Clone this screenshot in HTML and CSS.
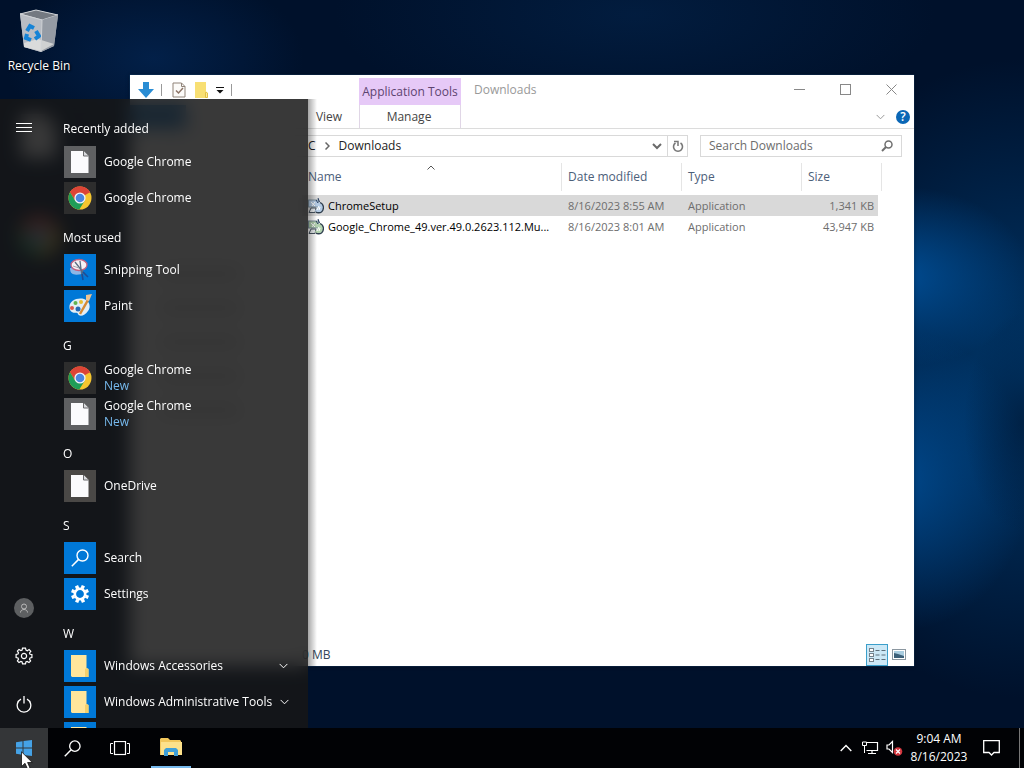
FILE: index.html
```html
<!DOCTYPE html>
<html lang="en">
<head>
<meta charset="utf-8">
<title>Desktop</title>
<link rel="stylesheet" href="styles.css">
</head>
<body>
<svg class="defs" width="0" height="0" aria-hidden="true">
  <defs>
    <symbol id="chrome" viewBox="0 0 24 24">
      <circle cx="12" cy="12" r="11.5" fill="#f6c62f"/>
      <path d="M12 12 L2.04 6.25 A11.5 11.5 0 0 1 21.96 6.25 Z" fill="#dc4537"/>
      <path d="M12 6.5 H22.2 A11.5 11.5 0 0 0 2.04 6.25 L7.2 14.7 Z" fill="#dc4537"/>
      <path d="M2.04 6.25 A11.5 11.5 0 0 0 11.3 23.5 L16.7 14.8 L12 12 L7.2 14.7 Z" fill="#1f9d58"/>
      <circle cx="12" cy="12" r="5.6" fill="#f3f5f8"/>
      <circle cx="12" cy="12" r="4.3" fill="#4a86e0"/>
    </symbol>
    <symbol id="page" viewBox="0 0 18 22">
      <path d="M0 0 H12.500 L17.500 5 V22 H0 Z" fill="#fbfbfd"/>
      <path d="M12.500 0 V5 H17.500" fill="#d9dadd" stroke="#6a6a6c" stroke-width="1"/>
    </symbol>
    <symbol id="folder" viewBox="0 0 18 22">
      <path d="M0 0 H15.500 V13 L17.500 14 V22 H1 L0 21 Z" fill="#ffe59b"/>
      <path d="M15.500 13 L17.500 14 V22 H14 V14 Z" fill="#f4cf6c"/>
    </symbol>
    <symbol id="lens" viewBox="0 0 18 18">
      <circle cx="11.500" cy="6.500" r="5.500" fill="none" stroke="currentColor" stroke-width="1.400"/>
      <path d="M7.600 10.400 L.8 17.200" stroke="currentColor" stroke-width="1.500"/>
    </symbol>
    <symbol id="chev" viewBox="0 0 10 6">
      <path d="M.7 .7 L5 5 L9.300 .7" fill="none" stroke="currentColor" stroke-width="1.100"/>
    </symbol>
    <symbol id="setup" viewBox="0 0 16 16">
      <rect x=".5" y="2" width="10" height="7" fill="currentColor" stroke="#7f909c"/>
      <path d="M1 14.500 L3 10 H8 L7 14.500 Z" fill="#eef2f5" stroke="#4a5662"/>
      <path d="M3 4 L7 8 M7 4 L4 8" stroke="#fff"/>
      <path d="M10 4.500 C16 4 17 11 13.500 14 C11 15.500 7.500 15 7 12.500 C9 11 10.500 9 10 4.500 Z" fill="currentColor"/>
      <path d="M12 4.500 C16 6 16.500 11 13.500 14 C12 15 9 15 8 14" fill="none" stroke="#2f3e4e" stroke-width="1.300"/>
      <path d="M11 8 L9 12 M12 9 L11 12" stroke="#fff"/>
      <path d="M10 0 L11.500 4 M8 2 L10 5" stroke="#243a5c"/>
    </symbol>
  </defs>
</svg>

<main class="desktop">
  <div class="shortcuts">
    <a class="shortcut" href="#bin">
      <svg width="40" height="44" viewBox="0 0 40 44" aria-hidden="true">
        <path d="M1 5 L17 1 L39 6 L35 37 L22 43 L5 38 Z" fill="#b5b9bf"/>
        <path d="M1 5 L17 1 L39 6 L23 11 Z" fill="#747981" stroke="#d0d3d7"/>
        <path d="M1 5 L23 11 L22 43 L5 38 Z" fill="#b9bdc4"/>
        <path d="M23 11 L39 6 L35 37 L22 43 Z" fill="#959ba4"/>
        <path d="M5 34 L19 30 L35 35 L22 42 L5 38 Z" fill="#e8e8e5" opacity=".7"/>
        <g fill="none" stroke="#1683d6" stroke-width="4">
          <path d="M8 22 L11 17 L15 19"/><path d="M17 22 L20 27 L16 30"/><path d="M12 31 L7 29 L8 25"/>
        </g>
        <path d="M1 5 L23 11 L22 43" fill="none" stroke="#cfd2d6"/>
      </svg>
      <span>Recycle Bin</span>
    </a>
    <svg class="covered" width="36" height="44" viewBox="0 0 18 22" aria-hidden="true"><use href="#page"/></svg>
    <svg class="covered" width="44" height="44" aria-hidden="true"><use href="#chrome"/></svg>
  </div>

  <section class="window" aria-label="Downloads">
    <header class="titlebar">
      <div class="quick">
        <svg width="16" height="16" viewBox="0 0 16 16" aria-hidden="true"><path d="M5 0 H11 V7 H16 L8 16 L0 7 H5 Z" fill="#2a8dd4"/></svg>
        <i class="sep"></i>
        <button class="plain" aria-label="Properties"><svg width="14" height="16" viewBox="0 0 14 16"><path d="M1 1 H9.500 L13 4.500 V15 H1 Z M9.500 1 V4.500 H13" fill="#fcfbf9" stroke="#8f8379"/><path d="M4 8.500 L6.500 11 L11 6" fill="none" stroke="#8c7467" stroke-width="1.500"/></svg></button>
        <button class="plain" aria-label="New folder"><svg width="14" height="16" viewBox="0 0 14 16"><path d="M1 0 H12 V10 L13.500 11 V16 H1 Z" fill="#f8df73"/><path d="M12 10 L13.500 11 V15.500 H11.500 V11 Z" fill="#fbeb9e" stroke="#e3c042"/></svg></button>
        <button class="plain" aria-label="Customize"><svg width="8" height="7" viewBox="0 0 8 7"><path d="M0 .5 H8" stroke="#111"/><path d="M.5 3 H7.500 L4 6.500 Z" fill="#111"/></svg></button>
        <i class="sep"></i>
      </div>
      <div class="context">Application Tools</div>
      <h1>Downloads</h1>
      <div class="controls">
        <button class="plain" aria-label="Minimize"><svg width="11" height="11"><path d="M0 5.500 H11" stroke="#888"/></svg></button>
        <button class="plain" aria-label="Maximize"><svg width="11" height="11"><rect x=".5" y=".5" width="10" height="10" fill="none" stroke="#888"/></svg></button>
        <button class="plain" aria-label="Close"><svg width="11" height="11"><path d="M.5 .5 L10.500 10.500 M10.500 .5 L.5 10.500" stroke="#888"/></svg></button>
      </div>
    </header>
    <nav class="tabs">
      <i class="file-tab"></i>
      <button class="plain view">View</button>
      <button class="plain manage">Manage</button>
      <div class="help">
        <button class="plain" aria-label="Expand ribbon"><svg width="9" height="6" viewBox="0 0 10 6"><use href="#chev"/></svg></button>
        <button class="plain question" aria-label="Help">?</button>
      </div>
    </nav>
    <div class="location">
      <div class="address">
        <button class="plain crumb">C</button>
        <svg class="arrow" width="5" height="8"><path d="M.5 .5 L4 4 L.5 7.500" fill="none" stroke="#666" stroke-width="1.500"/></svg>
        <button class="plain crumb">Downloads</button>
        <button class="plain drop" aria-label="Previous locations"><svg width="10" height="7"><path d="M1 1 L5 5 L9 1" fill="none" stroke="#6a6a6a" stroke-width="2"/></svg></button>
        <button class="plain refresh" aria-label="Refresh"><svg width="12" height="13"><path d="M3.500 3 A4.500 4.500 0 1 0 8.500 3" fill="none" stroke="#777" stroke-width="1.600"/><path d="M2 1.500 H6 V6" fill="none" stroke="#777" stroke-width="1.500"/></svg></button>
      </div>
      <label class="search">
        <input type="search" placeholder="Search Downloads" aria-label="Search Downloads">
        <svg width="12" height="12"><circle cx="7.500" cy="4.500" r="3.500" fill="none" stroke="#6f6f6f" stroke-width="1.500"/><path d="M5 7 L1 11" stroke="#6f6f6f" stroke-width="2"/></svg>
      </label>
    </div>
    <div class="body">
      <div class="tree" aria-hidden="true"><i></i><i></i><i></i><i></i><i></i></div>
      <table class="files">
        <colgroup><col class="c-name"><col class="c-date"><col class="c-type"><col class="c-size"></colgroup>
        <thead>
          <tr><th class="sorted">Name<svg width="8" height="5"><path d="M.5 4.500 L4 1 L7.500 4.500" fill="none" stroke="#555"/></svg></th><th>Date modified</th><th>Type</th><th>Size</th></tr>
        </thead>
        <tbody>
          <tr class="selected"><td><svg class="blue" width="16" height="16"><use href="#setup"/></svg>ChromeSetup</td><td>8/16/2023 8:55 AM</td><td>Application</td><td>1,341 KB</td></tr>
          <tr><td><svg class="green" width="16" height="16"><use href="#setup"/></svg>Google_Chrome_49.ver.49.0.2623.112.Mu...</td><td>8/16/2023 8:01 AM</td><td>Application</td><td>43,947 KB</td></tr>
        </tbody>
      </table>
    </div>
    <footer class="status">
      <span>0 MB</span>
      <button class="plain mode on" aria-label="Details"><svg width="17" height="14" viewBox="0 0 17 14"><g fill="#fff" stroke="#74828c"><rect x=".5" y=".5" width="4" height="3"/><rect x=".5" y="5.500" width="4" height="3"/><rect x=".5" y="10.500" width="4" height="3"/></g><path d="M6.500 2.500 H10.500 M12.500 2.500 H16.500 M6.500 7 H10.500 M12.500 7 H16.500 M6.500 11.500 H10.500 M12.500 11.500 H16.500" stroke="#5d6f7b"/></svg></button>
      <button class="plain mode" aria-label="Large icons"><svg width="14" height="11" viewBox="0 0 14 11"><rect x=".5" y=".5" width="13" height="10" fill="#fff" stroke="#8b97a0"/><rect x="2" y="2" width="10" height="7" fill="#a9cde0"/><path d="M2 4 L6 5 L12 7 V9 H2 Z" fill="#3c6079"/></svg></button>
    </footer>
  </section>

  <aside class="start">
    <nav class="rail">
      <button class="plain" aria-label="Menu"><svg width="16" height="10"><path d="M0 .5 H16 M0 4.500 H16 M0 8.500 H16" stroke="#fff"/></svg></button>
      <button class="plain push" aria-label="Account"><svg width="20" height="20"><circle cx="10" cy="10" r="10" fill="#5d5f61"/><circle cx="10" cy="8.500" r="2.500" fill="none" stroke="#b9b9b9"/><path d="M6.500 14.500 C6.500 10.500 13.500 10.500 13.500 14.500" fill="none" stroke="#b9b9b9"/></svg></button>
      <button class="plain" aria-label="Settings"><svg width="18" height="18" viewBox="-9 -9 18 18"><path d="M-1.500 -7.900 H1.500 L2 -5.900 L3.300 -5.300 L5.100 -6.400 L6.800 -4.700 L5.500 -3 L6 -1.700 L7.900 -1.500 V1.500 L6 1.900 L5.500 3.100 L6.600 5 L5 6.600 L3.100 5.500 L1.900 6 L1.500 7.900 H-1.500 L-1.900 6 L-3.100 5.500 L-5 6.600 L-6.600 5 L-5.500 3.100 L-6 1.900 L-7.900 1.500 V-1.500 L-6 -1.900 L-5.500 -3.100 L-6.600 -5 L-5 -6.600 L-3.100 -5.500 L-1.900 -6 Z" fill="none" stroke="#fff" stroke-width="1.200"/><circle r="2.600" fill="none" stroke="#fff" stroke-width="1.200"/></svg></button>
      <button class="plain" aria-label="Power"><svg width="16" height="17"><path d="M5 3.200 A6.800 6.800 0 1 0 11 3.200" fill="none" stroke="#fff" stroke-width="1.300"/><path d="M8 0 V7.500" stroke="#fff" stroke-width="1.300"/></svg></button>
    </nav>
    <div class="apps">
      <h2>Recently added</h2>
      <a href="#a" class="app"><span class="tile gray"><svg width="18" height="22"><use href="#page"/></svg></span><span>Google Chrome</span></a>
      <a href="#a" class="app"><span class="tile dark"><svg width="24" height="24"><use href="#chrome"/></svg></span><span>Google Chrome</span></a>
      <h2>Most used</h2>
      <a href="#a" class="app"><span class="tile"><svg width="24" height="24" viewBox="0 0 24 24"><path d="M2 10 C2 18 8 17 14 16 L12 11 Z" fill="#8db6e6"/><ellipse cx="11" cy="7" rx="8" ry="5.500" fill="#f6f1f5" stroke="#c0607f" stroke-width="1.300"/><path d="M7 4 L18 18 M12 3 L14 19" stroke="#5b6c82" stroke-width="1.300"/><path d="M5 8 L11 10" stroke="#a5a5ae"/><path d="M15 14 L20 19 M14 16 L15 22" stroke="#174d9b" stroke-width="1.600"/></svg></span><span>Snipping Tool</span></a>
      <a href="#a" class="app"><span class="tile"><svg width="24" height="24" viewBox="0 0 24 24"><path d="M2 16 C-1 8 8 3 16 5 C22 7 23 13 20 17 C17 22 11 23 10 20 C9 17 5 21 2 16 Z" fill="#e2eef5"/><circle cx="4" cy="14" r="2" fill="#d9594c"/><circle cx="7.500" cy="9" r="2" fill="#61b34f"/><circle cx="13" cy="8" r="2" fill="#e8bd30"/><circle cx="10" cy="15" r="2.500" fill="#2569b5"/><path d="M12 20 L20 6" stroke="#d68b35" stroke-width="2.500"/><path d="M18 1 L24 0 L21 7 L18 6 Z" fill="#edc493"/></svg></span><span>Paint</span></a>
      <h2>G</h2>
      <a href="#a" class="app"><span class="tile dark"><svg width="24" height="24"><use href="#chrome"/></svg></span><span>Google Chrome<small>New</small></span></a>
      <a href="#a" class="app"><span class="tile gray"><svg width="18" height="22"><use href="#page"/></svg></span><span>Google Chrome<small>New</small></span></a>
      <h2>O</h2>
      <a href="#a" class="app"><span class="tile brown"><svg width="18" height="22"><use href="#page"/></svg></span><span>OneDrive</span></a>
      <h2>S</h2>
      <a href="#a" class="app"><span class="tile"><svg width="18" height="18"><use href="#lens"/></svg></span><span>Search</span></a>
      <a href="#a" class="app"><span class="tile"><svg width="18" height="18" viewBox="-9 -9 18 18"><circle r="5.200" fill="none" stroke="#fff" stroke-width="2.600"/><g stroke="#fff" stroke-width="3.400"><path d="M0 -9 V-6 M0 6 V9 M-9 0 H-6 M6 0 H9" transform="rotate(22)"/><path d="M0 -9 V-6 M0 6 V9 M-9 0 H-6 M6 0 H9" transform="rotate(67)"/></g></svg></span><span>Settings</span></a>
      <h2>W</h2>
      <a href="#a" class="app"><span class="tile"><svg width="18" height="22"><use href="#folder"/></svg></span><span>Windows Accessories</span><svg class="more" width="9" height="6"><use href="#chev"/></svg></a>
      <a href="#a" class="app"><span class="tile"><svg width="18" height="22"><use href="#folder"/></svg></span><span>Windows Administrative Tools</span><svg class="more" width="9" height="6"><use href="#chev"/></svg></a>
      <a href="#a" class="app" aria-label="More"><span class="tile"><svg width="18" height="22"><use href="#folder"/></svg></span></a>
    </div>
  </aside>
</main>

<footer class="taskbar">
  <button class="plain task active" aria-label="Start"><svg width="16" height="16"><path d="M0 2.300 L6.500 1.300 V7.500 H0 Z M7.500 1.100 L16 0 V7.500 H7.500 Z M0 8.500 H6.500 V14.700 L0 13.700 Z M7.500 8.500 H16 V16 L7.500 14.900 Z" fill="#45a2e6"/></svg></button>
  <button class="plain task" aria-label="Search"><svg width="17" height="17"><use href="#lens"/></svg></button>
  <button class="plain task" aria-label="Task view"><svg width="20" height="15"><rect x="4.500" y=".5" width="11" height="13" fill="none" stroke="#fff" stroke-width="1.200"/><path d="M3 2.500 H.5 V12.500 H3 M17 2.500 H19.500 V12.500 H17" fill="none" stroke="#fff"/></svg></button>
  <button class="plain task open" aria-label="File Explorer"><svg width="22" height="18"><path d="M0 1 L1 0 H8 L10 2 H20 L21 3 V17 H0 Z" fill="#f2c75c"/><path d="M1 4 H22 V17 H1 Z" fill="#fde18b"/><path d="M4 18 V12 L6 10 H16 L18 12 V18 H14 V14 H8 V18 Z" fill="#3f9fd8"/></svg></button>
  <div class="tray">
    <button class="plain" aria-label="Show hidden icons"><svg width="12" height="8"><path d="M.7 7 L6 1.500 L11.300 7" fill="none" stroke="#fff" stroke-width="1.400"/></svg></button>
    <button class="plain" aria-label="Network"><svg width="17" height="14"><path d="M5 1.500 H15.500 V9.500 H4.500 M10 9.500 V13 M6 12.500 H14" fill="none" stroke="#fff" stroke-width="1.200"/><path d="M.5 1 H4.500 V4.500 H.5 Z M2.500 4.500 V12" fill="none" stroke="#fff"/></svg></button>
    <button class="plain" aria-label="Volume muted"><svg width="17" height="16"><path d="M1 5 H3 L6.500 1.500 V12.500 L3 9 H1 Z" fill="none" stroke="#fff" stroke-width="1.200"/><circle cx="12" cy="11.500" r="4.300" fill="#d3353d"/><path d="M10 9.500 L14 13.500 M14 9.500 L10 13.500" stroke="#fff" stroke-width="1.200"/></svg></button>
    <button class="plain clock">9:04 AM<br>8/16/2023</button>
    <button class="plain" aria-label="Notifications"><svg width="17" height="16"><path d="M.7 .7 H16.300 V12.500 H11 L8.500 15 L6 12.500 H.7 Z" fill="none" stroke="#fff" stroke-width="1.300"/></svg></button>
    <button class="plain peek" aria-label="Show desktop"></button>
  </div>
</footer>
<svg class="cursor" width="12" height="19" aria-hidden="true"><path d="M.5 .8 V15.500 L4 12.300 L6.500 18 L9 17 L6.600 11.500 H11.300 Z" fill="#fff" stroke="#111" stroke-width=".8"/></svg>
</body>
</html>
```

FILE: styles.css
```css
* { box-sizing: border-box; }

body {
  margin: 0;
  height: 100vh;
  display: grid;
  grid-template-rows: 1fr 40px;
  overflow: hidden;
  font: 12px/16px "Open Sans", "Noto Sans", sans-serif;
  color: #fff;
  background: #00102b;
}

.defs { position: absolute; }

svg { display: block; flex: none; }

.plain {
  border: 0;
  padding: 0;
  margin: 0;
  background: none;
  font: inherit;
  color: inherit;
  display: flex;
  align-items: center;
  justify-content: center;
}

.desktop {
  position: relative;
  min-height: 0;
  overflow: hidden;
  background:
    radial-gradient(ellipse 60px 110px at 100% 58%, rgba(0, 22, 50, .6), rgba(0, 22, 50, 0)),
    radial-gradient(ellipse 130px 90px at 88% 38%, rgba(0, 86, 164, .8), rgba(0, 74, 145, 0)),
    radial-gradient(ellipse 130px 150px at 88% 66%, rgba(0, 80, 154, .8), rgba(0, 74, 145, 0)),
    radial-gradient(ellipse 260px 320px at 100% 52%, rgba(0, 62, 118, .85), rgba(0, 50, 100, 0)),
    radial-gradient(ellipse 150px 90px at 15% 8%, rgba(4, 42, 92, .6), rgba(0, 20, 50, 0)),
    radial-gradient(ellipse 300px 110px at 62% 2%, rgba(3, 36, 76, .6), rgba(0, 20, 50, 0)),
    #00112b;
}

.shortcuts {
  display: flex;
  flex-direction: column;
  align-items: center;
  gap: 40px;
  width: 78px;
  padding-top: 9px;
}

.shortcut {
  display: flex;
  flex-direction: column;
  align-items: center;
  gap: 5px;
  color: #fff;
  text-decoration: none;
  text-shadow: 1px 1px 2px #000;
}

.covered { margin-bottom: 16px; }

/* Explorer window */
.window {
  position: absolute;
  inset: 75px 110px 62px 130px;
  display: flex;
  flex-direction: column;
  background: #fff;
  color: #444;
  box-shadow: 0 0 1px #2a6ca8, 0 0 4px rgba(0, 0, 0, .4);
}

.titlebar { display: flex; height: 30px; }

.quick {
  display: flex;
  align-items: center;
  gap: 8px;
  width: 229px;
  padding-left: 8px;
}

.sep { width: 1px; height: 12px; margin: 0 2px 0 -1px; background: #999; }

.context {
  width: 102px;
  margin-top: 3px;
  background: #e6c9f7;
  color: #5d4470;
  line-height: 27px;
  text-align: center;
  white-space: nowrap;
}

h1 {
  flex: 1;
  margin: 0 0 0 13px;
  font: inherit;
  line-height: 30px;
  color: #999;
}

.controls { display: flex; padding-bottom: 2px; }
.controls .plain { width: 46px; }

.tabs {
  display: flex;
  height: 24px;
  border-bottom: 1px solid #dcdcdc;
}

.file-tab { width: 56px; background: #1979ca; }
.view { width: 60px; margin-left: 113px; }

.manage {
  width: 102px;
  padding-right: 2px;
  border-style: solid;
  border-width: 0 1px;
  border-color: #e0d6e6;
}

.help {
  display: flex;
  align-items: center;
  gap: 11px;
  margin-left: auto;
  padding-right: 4px;
  color: #999;
}

.question {
  width: 14px;
  height: 14px;
  border-radius: 50%;
  background: #0a67b6;
  color: #fff;
  font-weight: 600;
}

.location {
  display: flex;
  gap: 12px;
  padding: 6px 12px 6px 40px;
  color: #222;
}

.address {
  flex: 1;
  display: flex;
  align-items: center;
  height: 22px;
  padding-left: 137px;
  border: 1px solid #d9d9d9;
}

.arrow { margin: 0 9px; }
.drop { width: 20px; margin-left: auto; }
.refresh { width: 20px; height: 20px; border-left: 1px solid #d9d9d9; }

.search {
  display: flex;
  align-items: center;
  width: 202px;
  height: 22px;
  padding: 0 8px;
  border: 1px solid #d9d9d9;
}

.search input {
  flex: 1;
  min-width: 0;
  border: 0;
  padding: 0;
  outline: 0;
  background: none;
  font: inherit;
}

.search input::placeholder { color: #6d6d6d; opacity: 1; }

.body { flex: 1; min-height: 0; display: flex; }

.tree {
  display: flex;
  flex-direction: column;
  gap: 20px;
  width: 172px;
  padding: 104px 30px 0;
}

.tree i { width: 80px; height: 14px; background: #ddd; }

.files {
  align-self: flex-start;
  table-layout: fixed;
  width: 580px;
  border-spacing: 0;
  color: #6d6d6d;
}

.c-name { width: 260px; }
.c-date, .c-type { width: 120px; }
.c-size { width: 80px; }

.files th {
  position: relative;
  height: 28px;
  padding: 0 6px;
  border-right: 1px solid #e5e5e5;
  font-weight: 400;
  text-align: left;
  color: #4c607a;
}

.sorted svg { position: absolute; top: 2px; left: 125px; }
.files thead::after { content: ""; display: block; height: 4px; }

.files td {
  height: 21px;
  padding: 0 6px;
  font-size: 11px;
  line-height: 20px;
  white-space: nowrap;
}

.files td:first-child { color: #000; }
.files td:first-child svg { display: inline-block; margin-right: 4px; vertical-align: -4px; }
.blue { color: #b4cbe4; }
.green { color: #b3d3b0; }

.files td:last-child {
  padding-right: 4px;
  border-right: 4px solid transparent;
  background-clip: padding-box;
  text-align: right;
}

.selected td { background-color: #d9d9d9; }

.status {
  display: flex;
  align-items: center;
  height: 23px;
  padding: 0 4px 0 172px;
  color: #33475b;
}

.status span { margin-right: auto; }
.mode { width: 22px; height: 22px; }
.mode.on { border: 1px solid #3b9fcb; background: #cce8f6; }

/* Start menu */
.start {
  position: absolute;
  inset: 99px auto 0 0;
  width: 308px;
  display: flex;
  overflow: hidden;
  background: rgba(22, 22, 22, .85);
  backdrop-filter: blur(9px);
}

.window::after {
  content: "";
  position: absolute;
  inset: 24px auto 0 178px;
  width: 9px;
  background: linear-gradient(90deg, rgba(0, 0, 0, .35), rgba(0, 0, 0, 0));
}

.rail {
  flex: none;
  display: flex;
  flex-direction: column;
  width: 48px;
  padding-top: 5px;
}

.rail .plain { height: 48px; }
.push { margin-top: auto; }

.apps { flex: 1; min-width: 0; padding: 9px 0 0 16px; }

.apps h2 {
  height: 36px;
  margin: 0 0 0 -1px;
  padding-top: 6px;
  font: inherit;
  line-height: 32px;
}

.apps h2:first-child { padding-top: 5px; }

.app {
  display: flex;
  align-items: center;
  gap: 8px;
  height: 36px;
  padding-right: 20px;
  color: #fff;
  text-decoration: none;
  white-space: nowrap;
}

.app small { display: block; font-size: 12px; color: #76b9ed; }
.more { margin-left: auto; }

.tile {
  flex: none;
  display: grid;
  place-items: center;
  width: 32px;
  height: 32px;
  background: #0078d7;
}

.tile.gray { background: #5f6062; }
.tile.dark { background: #2d2d2d; }
.tile.brown { background: #4a4846; }

/* Taskbar */
.taskbar { display: flex; background: #010205; }
.task { width: 48px; height: 40px; }
.task.active { background: #343638; }

.task.open {
  width: 40px;
  margin-left: 7px;
  border-bottom: 2px solid #76b9ed;
}

.tray { display: flex; margin-left: auto; }
.tray .plain { width: 24px; }
.tray .clock { width: 66px; line-height: 18px; white-space: nowrap; }
.tray .clock + .plain { width: 38px; margin-right: 9px; }
.tray .peek { width: 5px; border-left: 1px solid #777; }

.cursor { position: absolute; left: 21px; top: 751px; }
```
